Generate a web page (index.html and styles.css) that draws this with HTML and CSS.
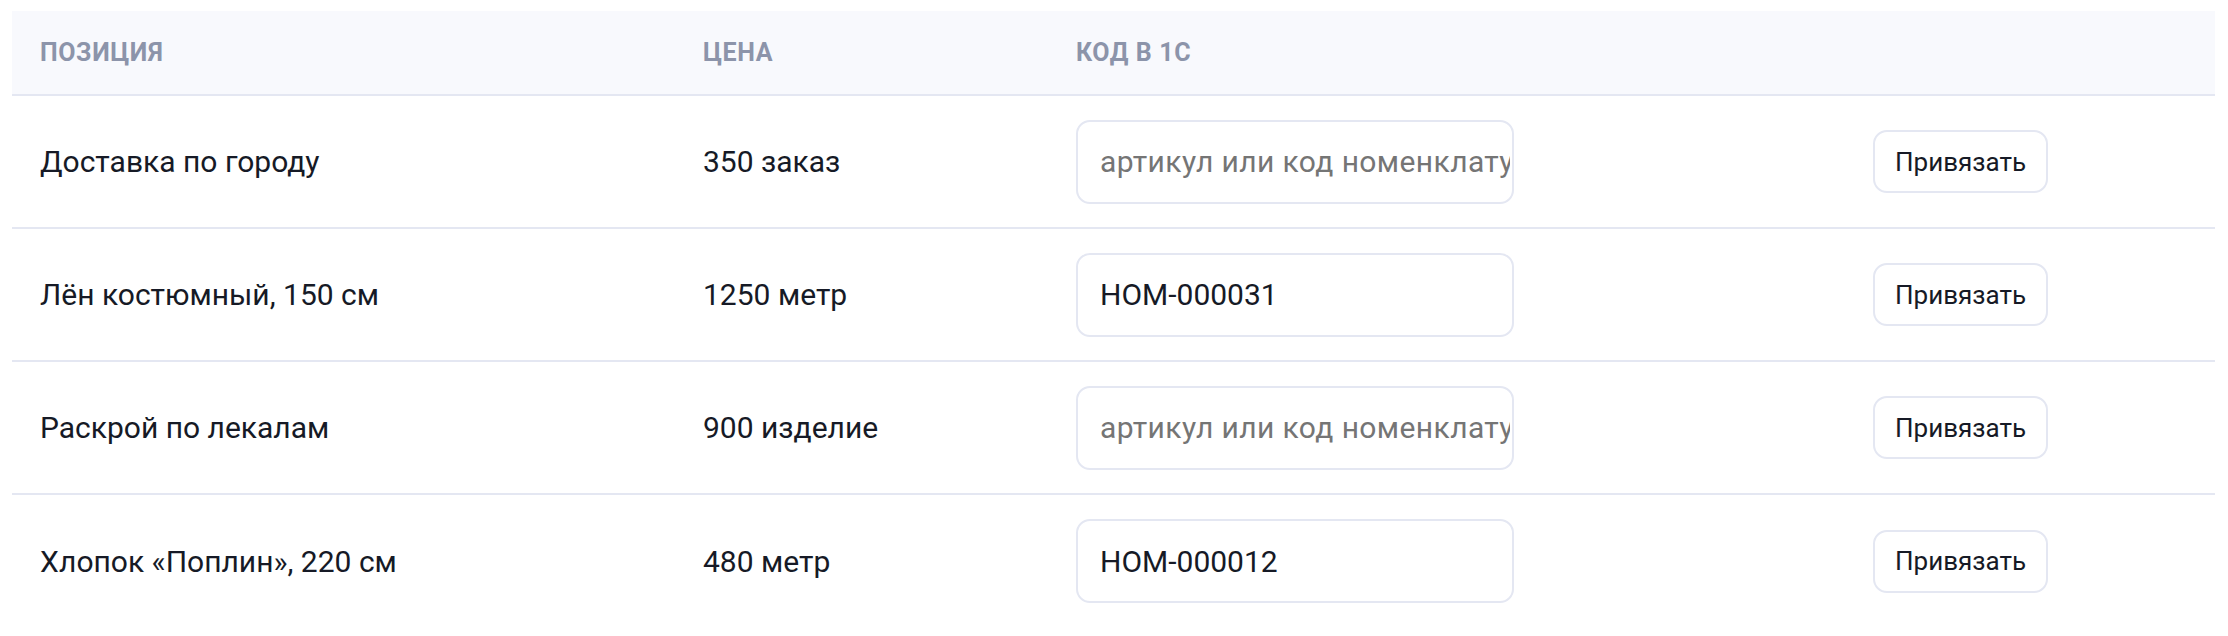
FILE: index.html
```html
<!DOCTYPE html>
<html lang="ru">
<head>
    <meta charset="UTF-8">
    <meta name="viewport" content="width=device-width, initial-scale=1.0">
    <title>Привязка к 1С</title>
    <link rel="stylesheet" href="styles.css">
</head>
<body>
    <table class="bind">
        <thead>
            <tr>
                <th class="c-name">Позиция</th>
                <th class="c-price">Цена</th>
                <th class="c-code">Код в 1С</th>
                <th class="c-act"></th>
            </tr>
        </thead>
        <tbody>
            <tr>
                <td>Доставка по городу</td>
                <td>350 заказ</td>
                <td><input type="text" class="code" placeholder="артикул или код номенклатуры"></td>
                <td><button class="btn">Привязать</button></td>
            </tr>
            <tr>
                <td>Лён костюмный, 150 см</td>
                <td>1250 метр</td>
                <td><input type="text" class="code" value="НОМ-000031" placeholder="артикул или код номенклатуры"></td>
                <td><button class="btn">Привязать</button></td>
            </tr>
            <tr>
                <td>Раскрой по лекалам</td>
                <td>900 изделие</td>
                <td><input type="text" class="code" placeholder="артикул или код номенклатуры"></td>
                <td><button class="btn">Привязать</button></td>
            </tr>
            <tr>
                <td>Хлопок «Поплин», 220 см</td>
                <td>480 метр</td>
                <td><input type="text" class="code" value="НОМ-000012" placeholder="артикул или код номенклатуры"></td>
                <td><button class="btn">Привязать</button></td>
            </tr>
        </tbody>
    </table>
</body>
</html>
```

FILE: styles.css
```css
* {
    margin: 0;
    padding: 0;
    box-sizing: border-box;
}
body {
    background: #fff;
    font-family: Roboto, "Noto Sans", Arial, sans-serif;
    color: #161a26;
}
.bind {
    margin: 11px 13px 0 12px;
    width: 2203px;
    border-collapse: collapse;
    table-layout: fixed;
}
.bind th {
    height: 84px;
    padding: 0 28px;
    background: #f8f9fd;
    border-bottom: 2px solid #e4e7f2;
    text-align: left;
    font-size: 25px;
    font-weight: 700;
    letter-spacing: 0.6px;
    text-transform: uppercase;
    color: #8c94aa;
}
.c-name { width: 663px; }
.c-price { width: 373px; }
.c-code { width: 797px; }
.c-act { width: 370px; }

.bind td {
    height: 133px;
    padding: 0 28px;
    border-bottom: 2px solid #e4e7f2;
    font-size: 30px;
    vertical-align: middle;
}
.bind tbody tr:last-child td {
    border-bottom: none;
}
.code {
    display: block;
    width: 438px;
    height: 84px;
    padding: 0 2px 0 22px;
    border: 2px solid #e4e7f2;
    border-radius: 14px;
    background: #fff;
    font-family: Roboto, "Noto Sans", Arial, sans-serif;
    font-size: 30px;
    color: #161a26;
    outline: none;
}
.code::placeholder {
    color: #757575;
    letter-spacing: 0.4px;
}
.btn {
    height: 63px;
    padding: 0 20px;
    border: 2px solid #e4e7f2;
    border-radius: 14px;
    background: #fff;
    font-family: Roboto, "Noto Sans", Arial, sans-serif;
    font-size: 26px;
    color: #161a26;
    cursor: pointer;
}
```
